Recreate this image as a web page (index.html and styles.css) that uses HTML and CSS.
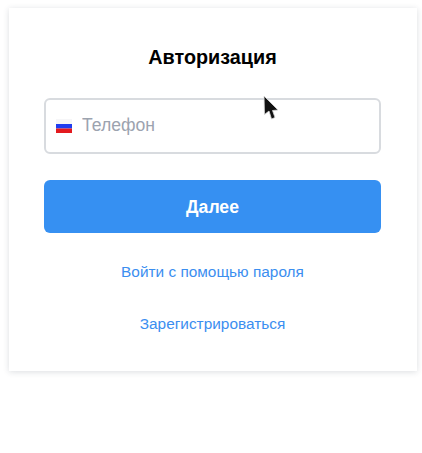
FILE: index.html
```html
<!DOCTYPE html>
<html lang="ru">
<head>
<meta charset="utf-8">
<title>Авторизация</title>
<link rel="stylesheet" href="styles.css">
</head>
<body>
<main class="card">
  <h1 class="title">Авторизация</h1>
  <label class="phone">
    <svg class="flag" viewBox="0 0 16 14" width="16" height="14" aria-hidden="true">
      <rect width="16" height="5" fill="#f6f6f8"/>
      <rect y="5" width="16" height="4.5" fill="#1f3df0"/>
      <rect y="9.5" width="16" height="4.5" fill="#e31a1f"/>
    </svg>
    <input class="phone-input" type="text" placeholder="Телефон">
  </label>
  <button class="submit" type="button">Далее</button>
  <a class="link link-first" href="#">Войти с помощью пароля</a>
  <a class="link link-second" href="#">Зарегистрироваться</a>
</main>
<svg class="cursor" viewBox="0 0 18 28" width="18" height="28" aria-hidden="true">
  <path d="M2 2 L2.5 20.5 L7 17 L9.5 25 L13 23.5 L10.5 16.5 L16 16 Z" fill="#111" stroke="#d8d8d8" stroke-width=".8"/>
</svg>
</body>
</html>
```
FILE: styles.css
```css
* { box-sizing: border-box; }
html, body { margin: 0; height: 100%; background: #fff; }
body { font-family: "Liberation Sans", Arial, sans-serif; overflow: hidden; }
.card {
  display: flex;
  flex-direction: column;
  align-items: stretch;
  width: 408px;
  height: 363px;
  margin: 8px 0 0 9px;
  padding: 37px 36px 0 35px;
  background: #fff;
  box-shadow: 0 1px 6px rgba(40, 50, 70, .16);
}
.title {
  margin: 0;
  font-size: 19.8px;
  line-height: 24px;
  font-weight: 700;
  color: #000;
  text-align: center;
}
.phone {
  display: flex;
  align-items: center;
  gap: 10px;
  height: 56px;
  margin-top: 29px;
  padding: 0 10px 2px;
  border: 2px solid #d8dbdf;
  border-radius: 6px;
}
.flag { flex: none; margin-top: 2px; }
.phone-input {
  flex: 1;
  min-width: 0;
  border: 0;
  outline: 0;
  padding: 0;
  background: transparent;
  font: 17.6px "Liberation Sans", Arial, sans-serif;
  color: #333;
}
.phone-input::placeholder { color: #9ca3af; opacity: 1; }
.submit {
  height: 53px;
  margin-top: 26px;
  padding: 1px 0 0;
  border: 0;
  border-radius: 6px;
  background: #3690f2;
  color: #fff;
  font: 700 17.6px "Liberation Sans", Arial, sans-serif;
}
.link {
  font-size: 15.4px;
  line-height: 18px;
  color: #3b8ef0;
  text-align: center;
  text-decoration: none;
}
.link-first { margin-top: 30px; }
.link-second { margin-top: 34px; }
.cursor { position: absolute; left: 262px; top: 94px; }
```
